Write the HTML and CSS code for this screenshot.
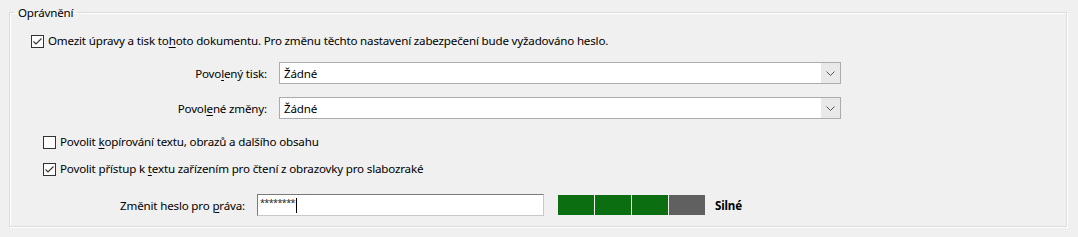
FILE: index.html
```html
<!DOCTYPE html>
<html lang="cs">
<head>
<meta charset="utf-8">
<link rel="stylesheet" href="styles.css">
</head>
<body>
<fieldset class="group">
  <legend class="legend">Oprávnění</legend>
  <div class="row row-main">
    <span class="cb checked"><svg viewBox="0 0 13 13" width="13" height="13"><rect x="0.5" y="0.5" width="12" height="12" fill="#fff" stroke="#333"/><polyline points="2.5,6.5 5,9 10.5,3.5" fill="none" stroke="#333" stroke-width="1.1"/></svg></span>
    <span class="cb-text">Omezit úpravy a tisk to<u>h</u>oto dokumentu. Pro změnu těchto nastavení zabezpečení bude vyžadováno heslo.</span>
  </div>
  <div class="row row-select first">
    <span class="label">Povo<u>l</u>ený tisk:</span>
    <div class="select"><span class="select-value">Žádné</span><span class="select-btn"><svg viewBox="0 0 9 5" width="9" height="5"><polyline points="0.5,0.5 4.5,4.5 8.5,0.5" fill="none" stroke="#555" stroke-width="1"/></svg></span></div>
  </div>
  <div class="row row-select">
    <span class="label">Povol<u>e</u>né změny:</span>
    <div class="select"><span class="select-value">Žádné</span><span class="select-btn"><svg viewBox="0 0 9 5" width="9" height="5"><polyline points="0.5,0.5 4.5,4.5 8.5,0.5" fill="none" stroke="#555" stroke-width="1"/></svg></span></div>
  </div>
  <div class="row row-sub first-sub">
    <span class="cb"><svg viewBox="0 0 13 13" width="13" height="13"><rect x="0.5" y="0.5" width="12" height="12" fill="#fff" stroke="#333"/></svg></span>
    <span class="cb-text">Povolit <u>k</u>opírování textu, obrazů a dalšího obsahu</span>
  </div>
  <div class="row row-sub second-sub">
    <span class="cb checked"><svg viewBox="0 0 13 13" width="13" height="13"><rect x="0.5" y="0.5" width="12" height="12" fill="#fff" stroke="#333"/><polyline points="2.5,6.5 5,9 10.5,3.5" fill="none" stroke="#333" stroke-width="1.1"/></svg></span>
    <span class="cb-text">Povolit přístup k <u>t</u>extu zařízením pro čtení z obrazovky pro slabozraké</span>
  </div>
  <div class="row row-pass">
    <span class="pass-label">Změnit heslo pro <u>p</u>ráva:</span>
    <div class="pass-input"><span class="stars">********</span><span class="caret"></span></div>
    <div class="strength">
      <span class="seg on"></span><span class="seg on"></span><span class="seg on"></span><span class="seg off"></span>
    </div>
    <span class="strength-text">Silné</span>
  </div>
</fieldset>
</body>
</html>
```
FILE: styles.css
```css
html, body {
  margin: 0;
  padding: 0;
  background: #f0f0f0;
}
body {
  font-family: "Noto Sans", "Open Sans", sans-serif;
  font-size: 11.6px;
  letter-spacing: -0.18px;
  color: #000;
  width: 1078px;
  height: 237px;
  overflow: hidden;
}
u {
  text-decoration-thickness: 1px;
  text-underline-offset: 2px;
}
.group {
  margin: 4px 11px 0 9px;
  padding: 0 0 10px 0;
  border: 1px solid #dcdcdc;
  box-shadow: 1px 1px 0 #fff, inset 1px 1px 0 #fff;
  min-width: 0;
  display: flex;
  flex-direction: column;
}
.legend {
  margin-left: 4px;
  padding: 0 4px;
  line-height: 17px;
  height: 17px;
}
.row {
  display: flex;
  align-items: center;
}
.row-main {
  height: 16px;
  margin-top: 12px;
  padding-left: 21px;
}
.cb {
  width: 13px;
  height: 13px;
  display: flex;
  flex: none;
}
.cb-text {
  margin-left: 4px;
  line-height: 16px;
  white-space: nowrap;
}
.row-select {
  height: 22px;
  margin-top: 13px;
}
.label {
  width: 269px;
  text-align: right;
  padding-right: 12px;
  box-sizing: border-box;
  white-space: nowrap;
}
.select {
  width: 562px;
  height: 22px;
  box-sizing: border-box;
  border: 1px solid #acacac;
  background: #fff;
  display: flex;
  align-items: center;
}
.select-value {
  flex: 1;
  padding-left: 4px;
}
.select-btn {
  width: 19px;
  align-self: stretch;
  background: #e9e9e9;
  display: flex;
  align-items: center;
  justify-content: center;
}
.row-sub {
  height: 16px;
  padding-left: 33px;
}
.first-sub { margin-top: 15px; }
.second-sub { margin-top: 11px; }
.row-pass {
  height: 22px;
  margin-top: 17px;
}
.pass-label {
  width: 247px;
  text-align: right;
  padding-right: 12px;
  box-sizing: border-box;
  white-space: nowrap;
}
.pass-input {
  width: 287px;
  height: 22px;
  box-sizing: border-box;
  border: 1px solid #7a7a7a;
  border-right-color: #c8c8c8;
  border-bottom-color: #c8c8c8;
  background: #fff;
  display: flex;
  align-items: center;
  padding-left: 2px;
}
.stars {
  font-size: 9px;
  letter-spacing: -0.6px;
  line-height: 12px;
  align-self: flex-start;
  margin-top: 2px;
  color: #222;
}
.caret {
  width: 1px;
  height: 15px;
  background: #000;
  margin-left: 1px;
}
.strength {
  display: flex;
  gap: 1px;
  margin-left: 14px;
  height: 20px;
}
.seg {
  width: 36px;
  height: 20px;
}
.seg.on { background: #0b6f12; }
.seg.off { background: #606060; }
.strength-text {
  margin-left: 10px;
  font-weight: bold;
}
```
